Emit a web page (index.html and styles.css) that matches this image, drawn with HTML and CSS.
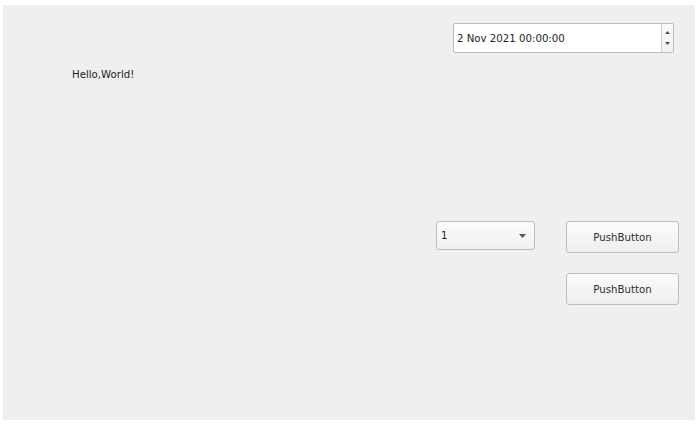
FILE: index.html
```html
<!DOCTYPE html>
<html>
<head>
<meta charset="utf-8">
<link rel="stylesheet" href="styles.css">
</head>
<body>
<div class="window">
  <div class="top-row">
    <div class="datetime">
      <span class="datetime-text">2 Nov 2021 00:00:00</span>
      <div class="spin">
        <svg class="spin-arrow" width="5" height="3" viewBox="0 0 5 3"><path d="M0 3 L2.5 0 L5 3 Z" fill="#505050"/></svg>
        <svg class="spin-arrow" width="5" height="3" viewBox="0 0 5 3"><path d="M0 0 L2.5 3 L5 0 Z" fill="#505050"/></svg>
      </div>
    </div>
  </div>
  <div class="label">Hello,World!</div>
  <div class="controls">
    <div class="combo">
      <span class="combo-text">1</span>
      <svg class="combo-arrow" width="7" height="4" viewBox="0 0 7 4"><path d="M0 0 L3.5 4 L7 0 Z" fill="#555"/></svg>
    </div>
    <div class="buttons">
      <button class="push">PushButton</button>
      <button class="push">PushButton</button>
    </div>
  </div>
</div>
</body>
</html>
```
FILE: styles.css
```css
html, body {
  margin: 0;
  padding: 0;
  background: #ffffff;
}
body {
  font-family: "DejaVu Sans", sans-serif;
  font-size: 10.2px;
  color: #2e2e2e;
}
.window {
  margin: 5px 0 0 3px;
  width: 692px;
  height: 415px;
  background: #efefef;
  box-sizing: border-box;
  padding-top: 18px;
  display: flex;
  flex-direction: column;
}
.top-row {
  display: flex;
  padding-left: 450px;
}
.datetime {
  width: 221px;
  height: 30px;
  box-sizing: border-box;
  border: 1px solid #bdbdbd;
  border-radius: 2px;
  background: #ffffff;
  display: flex;
  align-items: center;
}
.datetime-text {
  flex: 1;
  padding-left: 3px;
  color: #1e1e1e;
}
.spin {
  width: 11px;
  align-self: stretch;
  border-left: 1px solid #cfcfcf;
  background: linear-gradient(#fbfbfb, #f1f1f1);
  display: flex;
  flex-direction: column;
  align-items: center;
  justify-content: space-around;
  padding: 3px 0;
  border-radius: 0 2px 2px 0;
}
.spin-arrow {
  display: block;
}
.label {
  margin: 15px 0 0 69px;
  line-height: 13px;
  height: 13px;
  color: #1e1e1e;
}
.controls {
  margin: 140px 0 0 433px;
  display: flex;
  align-items: flex-start;
  gap: 31px;
}
.combo {
  width: 99px;
  height: 29px;
  box-sizing: border-box;
  border: 1px solid #bdbdbd;
  border-radius: 3px;
  background: linear-gradient(#fbfbfb, #f0f0f0);
  display: flex;
  align-items: center;
  padding: 0 8px 0 4px;
}
.combo-text {
  flex: 1;
  color: #1e1e1e;
}
.combo-arrow {
  display: block;
}
.buttons {
  display: flex;
  flex-direction: column;
  gap: 20px;
}
.push {
  width: 113px;
  height: 32px;
  box-sizing: border-box;
  border: 1px solid #bdbdbd;
  border-radius: 3px;
  background: linear-gradient(#fbfbfb, #eeeeee);
  font-family: "DejaVu Sans", sans-serif;
  font-size: 10.2px;
  color: #2e2e2e;
  padding: 0;
}
```
